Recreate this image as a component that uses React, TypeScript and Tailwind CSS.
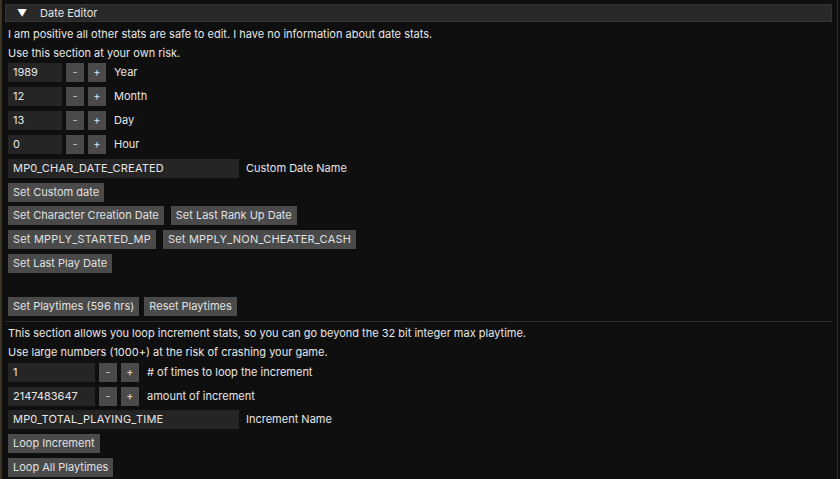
import React from "react";

const Btn = ({children}: {children: React.ReactNode}) => (
    <button type="button" className="h-[19px] px-[5px] bg-[#4a4a4a] text-[#e0e0e0] leading-none whitespace-nowrap">
        {children}
    </button>
);

const Stepper = ({value, label, width}: {value: string; label: string; width: string}) => (
    <div className="flex flex-row items-center h-[19px]">
        <div className={`${width} h-full bg-[#252525] flex items-center px-[5px]`}>{value}</div>
        <button type="button" className="ml-[4px] w-[18px] h-full bg-[#4a4a4a] text-[#bdbdbd]">-</button>
        <button type="button" className="ml-[4px] w-[18px] h-full bg-[#4a4a4a]">+</button>
        <span className="ml-[8px]">{label}</span>
    </div>
);

const TextField = ({value, label}: {value: string; label: string}) => (
    <div className="flex flex-row items-center h-[19px]">
        <div className="w-[231px] h-full bg-[#252525] flex items-center px-[5px] tracking-[0.2px]">{value}</div>
        <span className="ml-[7px]">{label}</span>
    </div>
);

const App = () => {
    return (
        <div className="w-[840px] h-[479px] bg-[#0f0f0f] flex flex-row overflow-hidden text-[#e6e6e6] text-[11px]"
             style={{fontFamily: "Inter, 'Noto Sans', sans-serif"}}>
            <div className="w-[2px] bg-[#3b3526]"/>
            <div className="flex-1 flex flex-col pt-[4px]">
                <div className="ml-[3px] mr-[3px] h-[18px] bg-[#292929] border border-[#333] flex items-center">
                    <span className="ml-[11px] text-[10px] text-white">▼</span>
                    <span className="ml-[13px]">Date Editor</span>
                </div>
                <div className="flex flex-col pl-[6px] pt-[5px] gap-[5px]">
                    <div className="h-[14px] flex items-center">I am positive all other stats are safe to edit. I have no information about date stats.</div>
                    <div className="h-[14px] flex items-center">Use this section at your own risk.</div>
                    <div className="-mt-[2px]"><Stepper value="1989" label="Year" width="w-[54px]"/></div>
                    <Stepper value="12" label="Month" width="w-[54px]"/>
                    <Stepper value="13" label="Day" width="w-[54px]"/>
                    <Stepper value="0" label="Hour" width="w-[54px]"/>
                    <TextField value="MP0_CHAR_DATE_CREATED" label="Custom Date Name"/>
                    <div className="flex flex-row"><Btn>Set Custom date</Btn></div>
                    <div className="flex flex-row gap-[7px] -mt-[1px]"><Btn>Set Character Creation Date</Btn><Btn>Set Last Rank Up Date</Btn></div>
                    <div className="flex flex-row gap-[7px] tracking-[0.2px]"><Btn>Set MPPLY_STARTED_MP</Btn><Btn>Set MPPLY_NON_CHEATER_CASH</Btn></div>
                    <div className="flex flex-row"><Btn>Set Last Play Date</Btn></div>
                    <div className="flex flex-row gap-[5px] mt-[19px]"><Btn>Set Playtimes (596 hrs)</Btn><Btn>Reset Playtimes</Btn></div>
                </div>
                <div className="mx-[3px] mt-[5px] h-px bg-[#2c2c2c]"/>
                <div className="flex flex-col pl-[6px] pt-[4px] gap-[5px]">
                    <div className="h-[14px] flex items-center">This section allows you loop increment stats, so you can go beyond the 32 bit integer max playtime.</div>
                    <div className="h-[14px] flex items-center">Use large numbers (1000+) at the risk of crashing your game.</div>
                    <div className="-mt-[1px]"><Stepper value="1" label="# of times to loop the increment" width="w-[87px]"/></div>
                    <Stepper value="2147483647" label="amount of increment" width="w-[87px]"/>
                    <div className="-mt-[1px]"><TextField value="MP0_TOTAL_PLAYING_TIME" label="Increment Name"/></div>
                    <div className="flex flex-row"><Btn>Loop Increment</Btn></div>
                    <div className="flex flex-row"><Btn>Loop All Playtimes</Btn></div>
                </div>
            </div>
            <div className="w-[2px] bg-[#0f0f0f]"/>
            <div className="w-px bg-[#2e2e2e]"/>
            <div className="w-[2px] bg-[#0f0f0f]"/>
        </div>
    );
};

export default App;
